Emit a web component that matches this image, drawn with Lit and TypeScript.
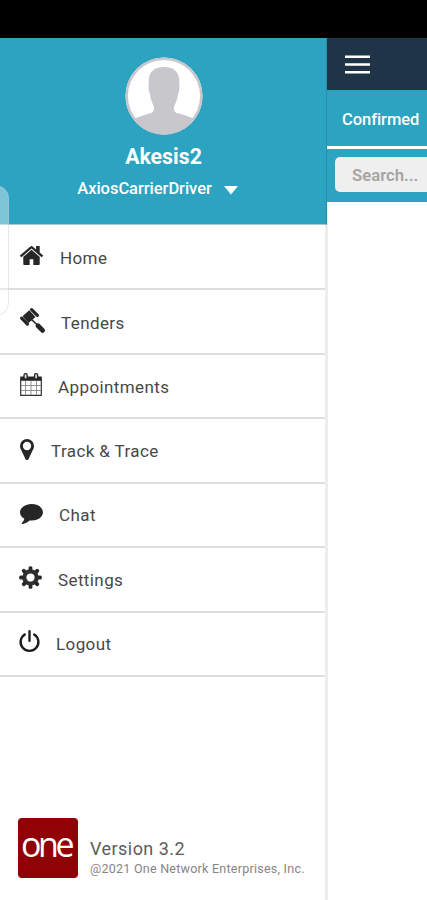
import { LitElement, html, css, svg, TemplateResult } from "lit";
import { customElement } from "lit/decorators.js";

interface Item {
  id: string;
  label: string;
  box: string;
  glyph: TemplateResult;
}

const teeth = [0, 45, 90, 135, 180, 225, 270, 315];

const items: Item[] = [
  {
    id: "home",
    label: "Home",
    box: "89 250 1614 1286",
    glyph: svg`<path d="M1472 992v480q0 26-19 45t-45 19h-384v-384h-256v384h-384q-26 0-45-19t-19-45v-480q0-1 .5-3t.5-3l575-474 575 474q1 2 1 6zm223-69l-62 74q-8 9-21 11h-3q-13 0-21-7l-692-577-692 577q-12 8-24 7-13-2-21-11l-62-74q-8-10-7-23.5t11-21.5l719-599q32-26 76-26t76 26l244 204v-195q0-14 9-23t23-9h192q14 0 23 9t9 23v408l219 182q10 8 11 21.5t-7 23.5z"/>`,
  },
  {
    id: "tenders",
    label: "Tenders",
    box: "0 0 25 25",
    glyph: svg`
      <path d="M2.500 8.200L9.300 2.200 15.500 9 8.500 15z"/>
      <path d="M1.600 10.200L7.400 16M11.600 1.600L17.400 7.400" fill="none" stroke="#262626" stroke-width="3.200" stroke-linecap="round"/>
      <path d="M11.500 11.500L18 17.500" fill="none" stroke="#262626" stroke-width="1.700"/>
      <path d="M18 17.800L22.600 22.400" fill="none" stroke="#262626" stroke-width="4.800" stroke-linecap="round"/>`,
  },
  {
    id: "appointments",
    label: "Appointments",
    box: "0 0 22 23",
    glyph: svg`
      <path d="M0.300 3.500h21.400v4.300h-21.400z"/>
      <path d="M0.700 5v17.400h20.600V5" fill="none" stroke="#333" stroke-width="1.200"/>
      <path d="M5.500 8v14M11 8v14M16.500 8v14M1 12.500h20M1 17.500h20" fill="none" stroke="#888" stroke-width="0.900"/>
      <rect x="4" y="0.600" width="3.200" height="5.400" rx="1.500" fill="#ccc" stroke="#222" stroke-width="1.200"/>
      <rect x="14.500" y="0.600" width="3.200" height="5.400" rx="1.500" fill="#ccc" stroke="#222" stroke-width="1.200"/>`,
  },
  {
    id: "track",
    label: "Track & Trace",
    box: "384 128 1024 1536",
    glyph: svg`<path d="M1200 640q0-126-89-215t-215-89-215 89-89 215 89 215 215 89 215-89 89-215zm208 0q0 109-33 179l-364 774q-16 33-47.500 52t-67.500 19-67.500-19-46.500-52l-365-774q-33-70-33-179 0-212 150-362t362-150 362 150 150 362z"/>`,
  },
  {
    id: "chat",
    label: "Chat",
    box: "0 256 1792 1540",
    glyph: svg`<path d="M1792 896q0 174-120 321.500t-326 233-450 85.500q-70 0-145-8-198 175-460 242-49 14-114 22-17 2-30.500-9t-17.500-29v-1q-3-4-.5-12t2-10 4.500-9.500l6-9 7-8.500 8-9q7-8 31-34.500t34.500-38 31-39.500 32.500-51 27-59 26-76q-157-89-247.500-220t-90.500-281q0-130 71-248.500t191-204.500 286-136.500 348-50.500q244 0 450 85.500t326 233 120 321.500z"/>`,
  },
  {
    id: "settings",
    label: "Settings",
    box: "-11.5 -11.5 23 23",
    glyph: svg`
      <circle r="6.200" fill="none" stroke="#2e2e2e" stroke-width="4.200"/>
      ${teeth.map(
        (a) => svg`<rect x="-1.900" y="-11.300" width="3.800" height="4.400" rx="1.500" transform="rotate(${a})"/>`
      )}`,
  },
  {
    id: "logout",
    label: "Logout",
    box: "0 0 21 22",
    glyph: svg`<path d="M5.800 4.400a8.900 8.900 0 1 0 9.400 0M10.500 1.300v9.500" fill="none" stroke="#1d1d1d" stroke-width="2.400" stroke-linecap="round"/>`,
  },
];

@customElement("app-root")
export class AppRoot extends LitElement {
  static styles = css`
    :host {
      display: block;
      position: relative;
      height: 900px;
      overflow: hidden;
      background: #fff;
      font-family: Roboto, "Liberation Sans", sans-serif;
    }
    .status { height: 38px; background: #000; }
    .screen { display: flex; height: 862px; }
    .drawer {
      flex: none;
      display: flex;
      flex-direction: column;
      border-right: 3px solid #ededef;
      box-sizing: border-box;
      width: 328px;
    }
    .profile {
      height: 187px;
      box-sizing: border-box;
      padding-top: 19px;
      margin-right: -2px;
      background: #2ca3c0;
      border-right: 1px solid #278fa9;
      border-bottom: 1px solid #a9c5cd;
      color: #fff;
      display: flex;
      flex-direction: column;
      align-items: center;
    }
    .avatar { width: 78px; height: 78px; display: block; margin-left: 1px; }
    .name { font-size: 21.3px; line-height: 24px; font-weight: 700; margin-top: 10px; margin-left: 1px; }
    .role {
      display: flex;
      align-items: center;
      gap: 12px;
      margin-top: 10px;
      margin-left: -11px;
      font-size: 16.5px;
      line-height: 20px;
      font-weight: 500;
      letter-spacing: -0.03px;
    }
    .caret { width: 14px; height: 9px; margin-top: 3px; }
    .menu { margin-top: 1px; height: 451px; display: flex; flex-direction: column; }
    .item {
      flex: 1;
      box-sizing: border-box;
      display: flex;
      align-items: center;
      padding-left: 20px;
      border-bottom: 2px solid #dedede;
      color: #484848;
      font-size: 17px;
      line-height: 20px;
      letter-spacing: 0.4px;
    }
    .icon { display: block; fill: #262626; margin-bottom: 3px; overflow: visible; }
    .label { margin-top: 2px; }
    .home .icon { width: 23px; height: 19px; margin-right: 17px; }
    .tenders .icon { width: 25px; height: 25px; margin-right: 16px; }
    .appointments .icon { width: 22px; height: 23px; margin-right: 16px; }
    .track .icon { width: 14px; height: 21px; margin-right: 17px; margin-bottom: 2px; }
    .chat .icon { width: 23px; height: 20px; margin-right: 16px; margin-bottom: 1px; }
    .chat .label { margin-top: 0; }
    .settings .icon { width: 23px; height: 23px; margin: 0 16px 4px -1px; }
    .logout .icon { width: 21px; height: 22px; margin: 0 16px 6px -1px; }
    .logout .label { margin-top: 0; }
    .footer { margin-top: auto; display: flex; padding: 0 0 22px 18px; }
    .logo {
      width: 60px;
      height: 60px;
      border-radius: 4px;
      background: #8f0205;
      color: #fff;
      box-sizing: border-box;
      padding-left: 3px;
      font-family: "Open Sans", "Noto Sans", sans-serif;
      font-weight: 500;
      font-size: 34px;
      line-height: 53px;
      letter-spacing: -3.4px;
    }
    .about { margin-left: 12px; padding-top: 20px; color: #5c5c5c; }
    .version { font-size: 18px; line-height: 22px; letter-spacing: 0.45px; }
    .copy { font-size: 12.5px; line-height: 18px; color: #858585; letter-spacing: 0.25px; white-space: nowrap; }
    .page { flex: 1; min-width: 0; overflow: hidden; margin-left: -1px; }
    .bar { height: 52px; background: #1f3447; display: flex; align-items: center; padding-left: 18px; }
    .burger { width: 25px; height: 19px; }
    .tab {
      height: 56px;
      background: #2ca3c0;
      color: #fff;
      font-size: 16.5px;
      font-weight: 500;
      line-height: 60px;
      padding-left: 15px;
      letter-spacing: -0.05px;
      border-bottom: 3px solid #fff;
    }
    .search { height: 53px; box-sizing: border-box; padding: 8px 0 0 8px; background: #2ca3c0; }
    .field {
      width: 200px;
      height: 35px;
      box-sizing: border-box;
      padding-left: 17px;
      border-radius: 5px;
      background: #efefef;
      color: #a5a5a5;
      font-size: 16.7px;
      font-weight: 600;
      line-height: 37px;
    }
    .handle {
      position: absolute;
      left: -24px;
      top: 185px;
      width: 33px;
      height: 131px;
      box-sizing: border-box;
      border-radius: 14px;
      background: rgba(255, 255, 255, 0.38);
      border: 1px solid rgba(190, 200, 204, 0.4);
    }
  `;

  render() {
    return html`
      <div class="status"></div>
      <div class="screen">
        <aside class="drawer">
          <div class="profile">
            <svg class="avatar" viewBox="0 0 78 78">
              <defs><clipPath id="disc"><circle cx="39" cy="39" r="38.500" /></clipPath></defs>
              <circle cx="39" cy="39" r="38.500" fill="#fff" />
              <path
                clip-path="url(#disc)"
                fill="#c8c7cc"
                d="M39 10c-9.500 0-14.500 4.500-15.200 12v6c-.8 2-.3 6.500 1 8.500.8 6 2.200 9 4.200 13.500 .3 3-.3 5-2.500 6C22 57 14 59.500 8 62.500L8 78h62V62.500C64 59.500 57 57 51.500 56c-2.200-1-2.800-3-2.500-6 2-4.500 3.400-7.500 4.200-13.500 1.300-2 1.800-6.500 1-8.500v-6C53.500 14.500 48.500 10 39 10z"
              />
              <circle cx="39" cy="39" r="37.300" fill="none" stroke="#c8c7cc" stroke-width="2.500" />
            </svg>
            <div class="name">Akesis2</div>
            <div class="role">
              <span>AxiosCarrierDriver</span>
              <svg class="caret" viewBox="0 0 14 9"><path fill="#fff" d="M0 0h14L7 8.600z" /></svg>
            </div>
          </div>
          <nav class="menu">
            ${items.map(
              (i) => html`<div class="item ${i.id}">
                <svg class="icon" viewBox=${i.box} preserveAspectRatio="none">${i.glyph}</svg>
                <span class="label">${i.label}</span>
              </div>`
            )}
          </nav>
          <div class="footer">
            <div class="logo">one</div>
            <div class="about">
              <div class="version">Version 3.2</div>
              <div class="copy">@2021 One Network Enterprises, Inc.</div>
            </div>
          </div>
        </aside>
        <main class="page">
          <div class="bar">
            <svg class="burger" viewBox="0 0 25 19">
              <path d="M0 1.700h25M0 9.500h25M0 17.300h25" stroke="#fff" stroke-width="2.600" />
            </svg>
          </div>
          <div class="tab">Confirmed</div>
          <div class="search"><div class="field">Search...</div></div>
        </main>
      </div>
      <div class="handle"></div>
    `;
  }
}
